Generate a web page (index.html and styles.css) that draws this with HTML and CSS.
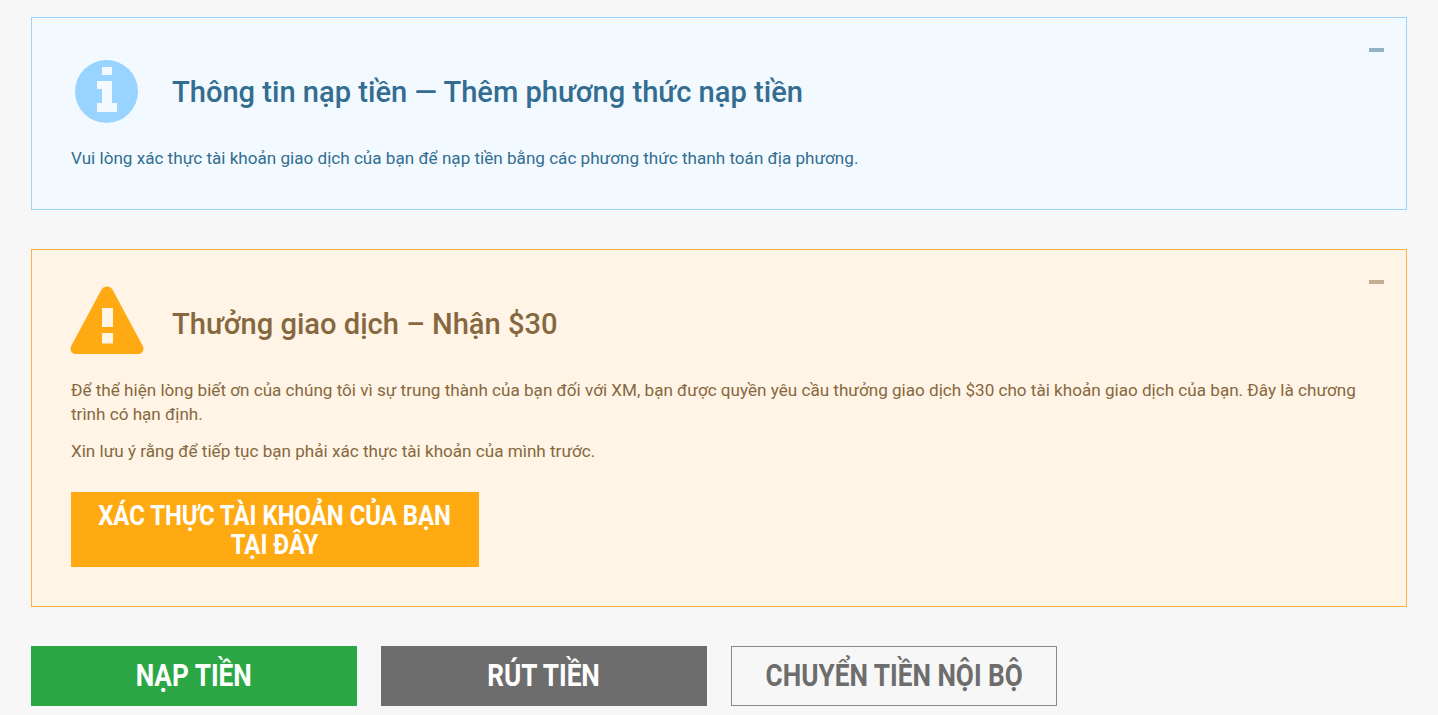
FILE: index.html
```html
<!DOCTYPE html>
<html lang="vi">
<head>
<meta charset="utf-8">
<title>Nạp tiền</title>
<link rel="stylesheet" href="styles.css">
</head>
<body>
<main class="page">
  <section class="panel panel-info">
    <span class="collapse"></span>
    <header class="panel-head">
      <span class="icon-cell">
        <svg class="icon icon-info" width="63" height="63" viewBox="0 0 63 63" aria-hidden="true">
          <circle cx="31.5" cy="31.5" r="31.5" fill="#99d3ff"/>
          <path fill="#f2faff" d="M27 7h10v8H27zM22 21h15v22h5v9H22v-9h5V29h-5z"/>
        </svg>
      </span>
      <h2 class="panel-title">Thông tin nạp tiền — Thêm phương thức nạp tiền</h2>
    </header>
    <p class="panel-text">Vui lòng xác thực tài khoản giao dịch của bạn để nạp tiền bằng các phương thức thanh toán địa phương.</p>
  </section>

  <section class="panel panel-warn">
    <span class="collapse"></span>
    <header class="panel-head">
      <span class="icon-cell">
        <svg class="icon icon-warn" width="74" height="68" viewBox="0 0 74 68" aria-hidden="true">
          <path fill="#ffaa13" d="M31 4.500C33.500-1 40.500-1 43 4.500L72.800 60C74.800 64 72 68 68 68H6C2 68-.8 64 1.200 60z"/>
          <path fill="#fff4e5" d="M32 22h11v19H32zM32 47h11v10.500H32z"/>
        </svg>
      </span>
      <h2 class="panel-title">Thưởng giao dịch – Nhận $30</h2>
    </header>
    <p class="panel-text">Để thể hiện lòng biết ơn của chúng tôi vì sự trung thành của bạn đối với XM, bạn được quyền yêu cầu thưởng giao dịch $30 cho tài khoản giao dịch của bạn. Đây là chương trình có hạn định.</p>
    <p class="panel-text panel-text-next">Xin lưu ý rằng để tiếp tục bạn phải xác thực tài khoản của mình trước.</p>
    <a class="verify-btn" href="#"><span class="condensed condensed-verify">XÁC THỰC TÀI KHOẢN CỦA BẠN<br>TẠI ĐÂY</span></a>
  </section>

  <nav class="actions">
    <a class="action action-green" href="#"><span class="condensed">NẠP TIỀN</span></a>
    <a class="action action-gray" href="#"><span class="condensed">RÚT TIỀN</span></a>
    <a class="action action-outline" href="#"><span class="condensed">CHUYỂN TIỀN NỘI BỘ</span></a>
  </nav>
</main>
</body>
</html>
```
FILE: styles.css
```css
* { box-sizing: border-box; }
html, body { margin: 0; height: 100%; overflow: hidden; }
body {
  background: #f7f7f7;
  font-family: Roboto, "Liberation Sans", sans-serif;
}
.page {
  display: flex;
  flex-direction: column;
  padding: 17px 31px 0;
}
.panel {
  position: relative;
  border: 1px solid;
  padding: 39px 39px 0;
}
.panel-info {
  height: 193px;
  margin-bottom: 39px;
  background: #f2faff;
  border-color: #99d3ff;
  color: #336d91;
}
.panel-warn {
  height: 358px;
  margin-bottom: 39px;
  background: #fff4e5;
  border-color: #ffb23f;
  color: #866840;
}
.collapse {
  position: absolute;
  top: 30px;
  right: 22px;
  width: 15px;
  height: 4px;
  background: currentColor;
  opacity: .5;
}
.panel-head {
  display: flex;
  align-items: center;
  height: 70px;
  margin-bottom: 19px;
}
.icon-cell {
  display: flex;
  justify-content: center;
  width: 71px;
  margin-right: 30px;
}
.icon-cell .icon { flex: none; }
.icon-info { margin-bottom: 2px; }
.icon-warn { margin-bottom: 8px; }
.panel-title {
  margin: 0;
  font-size: 29.1px;
  font-weight: 500;
  line-height: 36px;
  white-space: nowrap;
}
.panel-text {
  margin: 0;
  font-size: 17.1px;
  line-height: 24px;
}
.panel-text-next { margin-top: 13px; }
.verify-btn {
  display: flex;
  align-items: center;
  justify-content: center;
  width: 408px;
  height: 75px;
  margin-top: 29px;
  background: #ffaa13;
  color: #fff;
  font-size: 28px;
  font-weight: 700;
  line-height: 29px;
  text-align: center;
  text-decoration: none;
}
.condensed {
  display: inline-block;
  flex: none;
  white-space: nowrap;
  transform: scaleX(.845);
}
.condensed-verify { transform: scaleX(.854); }
.actions {
  display: flex;
  gap: 24px;
}
.action {
  display: flex;
  align-items: center;
  justify-content: center;
  width: 326px;
  height: 60px;
  padding-bottom: 2px;
  font-size: 31px;
  font-weight: 700;
  text-decoration: none;
}
.action-green { background: #2ca746; color: #fff; }
.action-gray { background: #6d6d6d; color: #fff; }
.action-outline { border: 1px solid #8a8a8a; color: #6d6d6d; background: #f7f7f7; }
```
